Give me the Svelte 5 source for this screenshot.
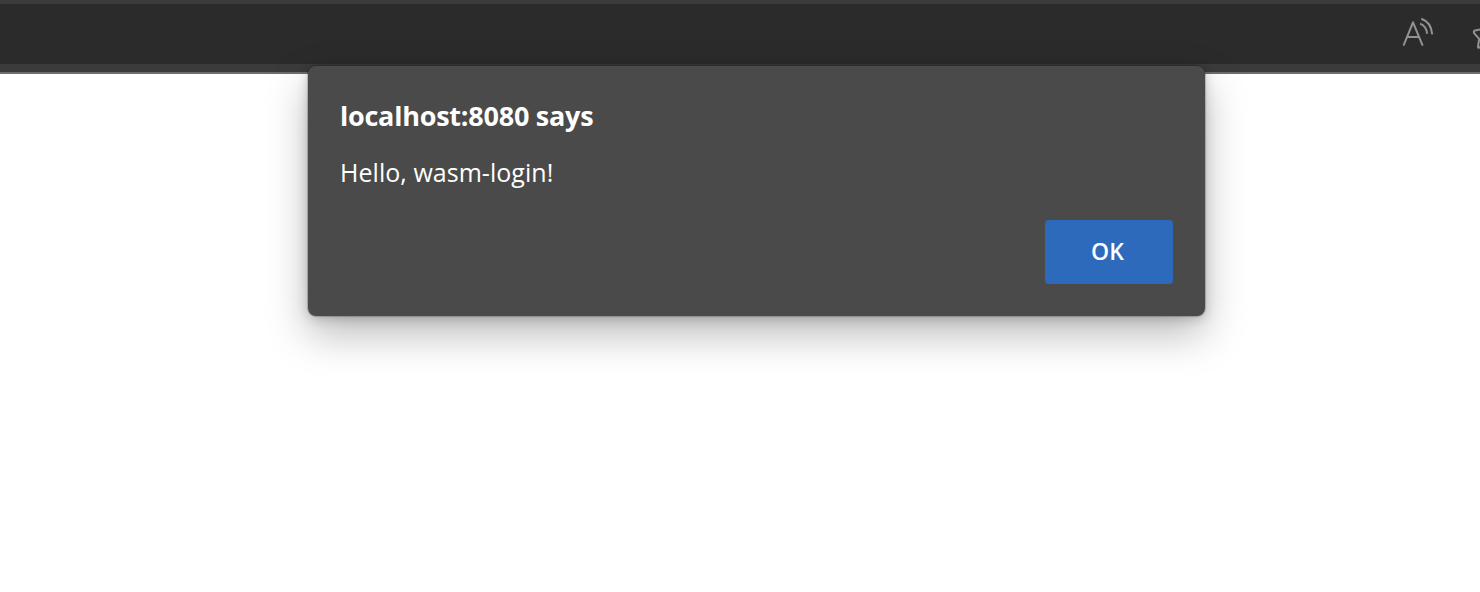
<script>
  const origin = 'localhost:8080';
  const message = 'Hello, wasm-login!';
</script>

<div class="window">
  <header>
    <div class="addressbar">
      <svg class="read" viewBox="0 0 34 32" width="34" height="32" aria-label="Read aloud">
        <path d="M3.5 29.7 13 6.3 22.7 29.7M7 21h12.4M20.1 7.6c4.1 1.7 6.7 5.3 7 10.2M21.3 2.7c6.8 2.4 10.4 8 10.9 15.7" />
      </svg>
      <svg class="star" viewBox="0 0 28 28" width="28" height="28" aria-label="Favorite">
        <path d="M14 0 17.5 7.4 26.5 8.6 19.8 16 21.8 26 14 22 8 26.7Q7 27 7 25.5L8.2 17.8 3.3 12.3Q2.1 10.4 4 9.4L11 8.2Z" />
      </svg>
    </div>
  </header>
  <main></main>
  <div class="dialog" role="alertdialog">
    <h1>{origin} says</h1>
    <p>{message}</p>
    <div class="actions"><button>OK</button></div>
  </div>
</div>

<style>
  :global(body) { margin: 0; background: #fff; overflow: hidden; }
  .window {
    position: relative;
    display: flex;
    flex-direction: column;
    height: 592px;
    overflow: hidden;
    font-family: "Open Sans", "Noto Sans", sans-serif;
  }
  header {
    box-sizing: border-box;
    height: 74px;
    padding: 4px 0 8px;
    background: #3b3b3b;
    border-bottom: 2px solid #6e6c6c;
  }
  .addressbar {
    display: flex;
    justify-content: flex-end;
    align-items: flex-start;
    box-sizing: border-box;
    height: 60px;
    padding-top: 12px;
    gap: 37px;
    background: #2b2b2b;
    overflow: hidden;
  }
  svg { flex: none; fill: none; stroke: #929292; stroke-width: 2; stroke-linejoin: round; }
  .star { margin: 5px -19px 0 0; }
  main { flex: 1; background: #fff; }
  .dialog {
    position: absolute;
    left: 308px;
    top: 66px;
    box-sizing: border-box;
    width: 897px;
    height: 250px;
    padding: 32px;
    border-radius: 8px;
    background: #4a4a4a;
    color: #fff;
    box-shadow: 0 0 1px 1px rgba(0, 0, 0, .2), 0 3px 12px rgba(0, 0, 0, .18), 0 18px 42px rgba(0, 0, 0, .27);
  }
  h1 { margin: 0; font-size: 27px; line-height: 36px; font-weight: 700; letter-spacing: -.24px; white-space: nowrap; }
  p { margin: 21px 0 0; font-size: 25px; line-height: 34px; letter-spacing: .04px; white-space: nowrap; }
  .actions { display: flex; justify-content: flex-end; margin-top: 31px; }
  button {
    width: 128px;
    height: 64px;
    padding: 0 3px 2px 0;
    border: 0;
    border-radius: 4px;
    background: #2d6abb;
    color: #fff;
    font: 600 23px "Open Sans", "Noto Sans", sans-serif;
  }
</style>
